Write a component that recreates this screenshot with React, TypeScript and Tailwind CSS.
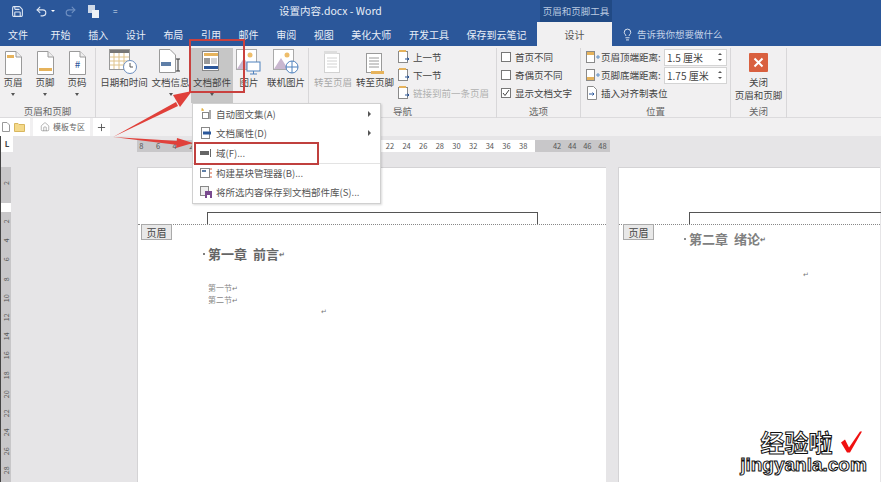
import { Home, Lightbulb, Plus, Redo2, Save, Undo2 } from "lucide-react";
import type { ReactNode } from "react";

const tabs = ["开始", "插入", "设计", "布局", "引用", "邮件", "审阅", "视图", "美化大师", "开发工具", "保存到云笔记"];
const rulerLeft = [8, 6, 4, 2];
const rulerMid = [2, 4, 6, 8, 10, 12, 14, 16, 18, 20, 22, 24, 26, 28, 30, 32, 34, 36, 38];
const rulerRight = [42, 44, 46, 48];
const vRuler = [2, 4, 6, 8, 10, 12, 14, 16, 18, 20, 22, 24, 26, 28];

function Caret() {
  return <span className="mt-[4px] block h-0 w-0 border-x-[2.5px] border-t-[3px] border-x-transparent border-t-[#555]" />;
}

function PageIcon({ band, hash }: { band?: "top" | "bottom"; hash?: boolean }) {
  return (
    <svg width="20" height="24" viewBox="0 0 20 24">
      <path d="M2.5 .5H13L18.5 6V23.5H2.5Z" fill="#fff" stroke="#9a9a9a" />
      <path d="M13 .5V6H18.5" fill="#eee" stroke="#9a9a9a" />
      {band === "top" && <rect x="4" y="4" width="7" height="3" fill="#e6b35c" />}
      {band === "bottom" && <rect x="4" y="17" width="13" height="3" fill="#e6b35c" />}
      {hash && <text x="10.5" y="17" fontSize="10" textAnchor="middle" fill="#2b579a">#</text>}
    </svg>
  );
}

function CalendarIcon() {
  return (
    <svg width="30" height="26" viewBox="0 0 30 26">
      <rect x=".5" y=".5" width="20" height="20" fill="#fff" stroke="#999" />
      <rect x="1" y="1" width="19" height="3" fill="#777" />
      <path d="M1 8H20M1 12H20M1 16H20M5 4V20M10 4V20M15 4V20" stroke="#e0c48c" />
      <circle cx="21" cy="18" r="6.5" fill="#fff" stroke="#6c8ebf" />
      <path d="M21 14V18H24" fill="none" stroke="#555" />
    </svg>
  );
}

function DocInfoIcon() {
  return (
    <svg width="26" height="26" viewBox="0 0 26 26">
      <path d="M1.5 .5H12L17.5 6V23.5H1.5Z" fill="#fff" stroke="#999" />
      <rect x="3" y="13" width="10" height="4" fill="#5f7fa8" />
      <path d="M18 10H22M20 10V22M18 22H22" fill="none" stroke="#333" />
    </svg>
  );
}

function PartsIcon() {
  return (
    <svg width="20" height="24" viewBox="0 0 20 24">
      <rect x=".5" y=".5" width="16" height="19" fill="#fff" stroke="#888" />
      <rect x="2" y="2" width="14" height="3" fill="#e6b35c" />
      <rect x="2" y="7" width="6" height="6" fill="#999" />
      <path d="M9 8H15M9 10H15M9 12H15" stroke="#aaa" />
      <rect x="2" y="15" width="14" height="3" fill="#2b579a" />
    </svg>
  );
}

function PictureIcon({ online }: { online?: boolean }) {
  return (
    <svg width="26" height="26" viewBox="0 0 26 26">
      <rect x=".5" y=".5" width="20" height="20" fill="#fff" stroke="#aaa" />
      <circle cx="14" cy="6" r="2.5" fill="#eebd6a" />
      <path d="M1 20L8 9L15 20Z" fill="#c9b7cf" />
      {online ? (
        <g fill="#fff" stroke="#4f81bd">
          <circle cx="19" cy="18" r="6" />
          <path d="M13 18H25M19 12V24" />
        </g>
      ) : (
        <g fill="#fff" stroke="#4f81bd">
          <rect x="11" y="13" width="13" height="9" />
          <path d="M17.5 22V25M14 25H21" />
        </g>
      )}
    </svg>
  );
}

function GotoIcon({ dim, top }: { dim?: boolean; top?: boolean }) {
  const c = dim ? "#d2d2d2" : "#9a9a9a";
  return (
    <svg width="22" height="24" viewBox="0 0 22 24">
      <rect x="2.5" y="2.5" width="15" height="19" fill="#fff" stroke={c} />
      <path d="M5 7H15M5 10H15M5 13H15M5 16H15" stroke={c} />
      <rect x={top ? 2 : 7} y={top ? 0 : 20} width="13" height="3" fill={dim ? "#ddd" : "#e6b35c"} />
    </svg>
  );
}

function SmallNavIcon() {
  return (
    <svg width="12" height="14" viewBox="0 0 12 14">
      <rect x=".5" y="1.5" width="9" height="11" fill="#fff" stroke="#8a8a8a" />
      <rect x="1" y="0" width="7" height="2" fill="#e6b35c" />
      <path d="M7 9H11M9.5 7.5L11 9L9.5 10.5" fill="none" stroke="#2b579a" />
    </svg>
  );
}

function DistanceIcon({ top }: { top?: boolean }) {
  return (
    <svg width="15" height="13" viewBox="0 0 15 13">
      <rect x=".5" y=".5" width="8" height="11" fill="#fff" stroke="#8a8a8a" />
      <rect x="1" y={top ? 1 : 8} width="7" height="3" fill="#e6b35c" />
      <path d="M10 6H14M12 4V8" stroke="#5f8fc5" />
    </svg>
  );
}

function Group({ label, className, children }: { label: string; className: string; children: ReactNode }) {
  return (
    <div className={`flex h-[70px] shrink-0 flex-col border-r border-[#d8d7d9] ${className}`}>
      <div className="flex flex-1">{children}</div>
      <div className="h-[13px] text-center text-[9.5px] leading-[12px] text-[#666]">{label}</div>
    </div>
  );
}

function LargeButton({ icon, label, className, caret, dim, active }: { icon: ReactNode; label: string; className: string; caret?: boolean; dim?: boolean; active?: boolean }) {
  return (
    <div className={`flex flex-col items-center ${active ? "bg-[#c6c6c6]" : ""} ${className}`}>
      <div className="flex h-[27px] items-end justify-center">{icon}</div>
      <div className={`mt-[1px] whitespace-nowrap text-[9.5px] leading-[13px] ${dim ? "text-[#a8a8a8]" : "text-[#444]"}`}>{label}</div>
      {caret && <Caret />}
    </div>
  );
}

function SmallRow({ icon, label, dim }: { icon: ReactNode; label: string; dim?: boolean }) {
  return (
    <div className={`flex h-[18px] items-center gap-[3px] whitespace-nowrap text-[9.5px] ${dim ? "text-[#b0b0b0]" : "text-[#444]"}`}>
      {icon}
      <span>{label}</span>
    </div>
  );
}

function CheckRow({ label, checked }: { label: string; checked?: boolean }) {
  return (
    <div className="flex h-[18px] items-center gap-[4px] whitespace-nowrap text-[9.5px] text-[#444]">
      <span className="flex h-[10px] w-[10px] items-center justify-center border border-[#777] bg-white">
        {checked && (
          <svg width="8" height="8" viewBox="0 0 8 8">
            <path d="M1 4L3 6.5L7 1" fill="none" stroke="#444" />
          </svg>
        )}
      </span>
      <span>{label}</span>
    </div>
  );
}

function SpinRow({ top, label, value }: { top?: boolean; label: string; value: string }) {
  return (
    <div className="flex h-[18px] items-center whitespace-nowrap text-[9.5px] text-[#444]">
      <DistanceIcon top={top} />
      <span className="w-[63px]">{label}</span>
      <span className="flex h-[17px] w-[63px] items-center justify-between border border-[#d4d4d4] bg-white pl-[2px] pr-[4px] text-[10px]">
        {value}
        <span className="flex flex-col gap-[4px]">
          <span className="block h-0 w-0 border-x-2 border-b-2 border-x-transparent border-b-[#555]" />
          <span className="block h-0 w-0 border-x-2 border-t-2 border-x-transparent border-t-[#555]" />
        </span>
      </span>
    </div>
  );
}

function MenuItem({ icon, label, arrow, divider }: { icon: ReactNode; label: ReactNode; arrow?: boolean; divider?: boolean }) {
  return (
    <div className={`flex h-[19.5px] items-center pl-[3px] pr-[9px] text-[9.5px] text-[#555] ${divider ? "border-t border-[#e3e3e3]" : ""}`}>
      <span className="flex w-[20px] justify-center">{icon}</span>
      <span className="flex-1 whitespace-nowrap">{label}</span>
      {arrow && <span className="h-0 w-0 border-y-[3px] border-l-[3px] border-y-transparent border-l-[#555]" />}
    </div>
  );
}

function ReturnMark({ className }: { className?: string }) {
  return <span className={`text-[7px] leading-none text-[#777] ${className ?? ""}`}>↵</span>;
}

function PageHeader({ className }: { className: string }) {
  return (
    <div className="pt-[44px]">
      <div className={`h-[12px] border-x border-t border-[#555] ${className}`} />
      <div className="border-t border-dotted border-[#888]" />
    </div>
  );
}

function HeaderTag({ className }: { className: string }) {
  return (
    <div className={`absolute top-[56px] flex h-[16px] w-[31px] items-center justify-center border border-[#aaa] bg-[#e8e8e8] text-[10px] text-[#444] ${className}`}>
      页眉
    </div>
  );
}

export default function App() {
  return (
    <div className="relative h-[482px] w-[881px] overflow-hidden bg-[#e6e5e7] [font-family:'Noto_Sans_CJK_SC','Liberation_Sans',sans-serif]">
      {/* title bar */}
      <div className="flex h-[22px] items-center bg-[#2b579a] text-white">
        <div className="flex w-[279px] items-center pl-[11px] text-[#dfe7f3]">
          <Save className="h-[13px] w-[13px]" />
          <Undo2 className="ml-[11px] h-[13px] w-[13px]" />
          <span className="ml-[3px] h-0 w-0 border-x-2 border-t-2 border-x-transparent border-t-white" />
          <Redo2 className="ml-[9px] h-[13px] w-[13px] text-[#6f90c2]" />
          <svg className="ml-[10px]" width="13" height="15" viewBox="0 0 13 15">
            <rect x="1" y="1" width="7" height="8" fill="#cfd9e8" />
            <rect x="5" y="6" width="7" height="8" fill="#eef2f7" />
          </svg>
          <span className="ml-[13px] text-[8px]">=</span>
        </div>
        <div className="w-[261px] whitespace-nowrap text-[10.5px] text-[#e8eef7]">设置内容.docx - Word</div>
        <div className="flex h-full w-[72px] items-center justify-center whitespace-nowrap bg-[#214a85] text-[9.5px] text-[#b9c9e0]">页眉和页脚工具</div>
      </div>

      {/* tabs */}
      <div className="flex h-[24px] items-center bg-[#2b579a] text-[10px] text-[#e8eef7]">
        <div className="flex w-[537px] gap-[17.6px] pl-[8px]">
          <span>文件</span>
          {tabs.map((t, i) => (
            <span key={i} className={i === 0 ? "ml-[5px] whitespace-nowrap" : "whitespace-nowrap"}>{t}</span>
          ))}
        </div>
        <div className="flex h-full w-[75px] items-center justify-center bg-[#f1f0f1] text-[#555]">设计</div>
        <div className="flex items-center gap-[3px] pl-[9px] text-[9.5px] text-[#c3d2e8]">
          <Lightbulb className="h-[13px] w-[13px] text-white" strokeWidth={1.5} />
          告诉我你想要做什么
        </div>
      </div>

      {/* ribbon */}
      <div className="flex h-[72px] border-b border-[#dcdbdd] bg-[#f1f0f1] pt-[2px]">
        <Group label="页眉和页脚" className="w-[96px]">
          <LargeButton icon={<PageIcon band="top" />} label="页眉" caret className="w-[26px]" />
          <LargeButton icon={<PageIcon band="bottom" />} label="页脚" caret className="ml-[6px] w-[26px]" />
          <LargeButton icon={<PageIcon hash />} label="页码" caret className="ml-[6px] w-[26px]" />
        </Group>
        <Group label="插入" className="w-[213px]">
          <LargeButton icon={<CalendarIcon />} label="日期和时间" className="ml-[4px] w-[48px]" />
          <LargeButton icon={<DocInfoIcon />} label="文档信息" caret className="ml-[3px] w-[39px]" />
          <LargeButton icon={<PartsIcon />} label="文档部件" caret active className="ml-[1px] h-[55px] w-[42px]" />
          <LargeButton icon={<PictureIcon />} label="图片" className="ml-[3px] w-[26px]" />
          <LargeButton icon={<PictureIcon online />} label="联机图片" className="ml-[4px] w-[40px]" />
        </Group>
        <Group label="导航" className="w-[188px]">
          <LargeButton icon={<GotoIcon dim top />} label="转至页眉" dim className="ml-[4px] w-[40px]" />
          <LargeButton icon={<GotoIcon />} label="转至页脚" className="ml-[2px] w-[40px]" />
          <div className="ml-[3px]">
            <SmallRow icon={<SmallNavIcon />} label="上一节" />
            <SmallRow icon={<SmallNavIcon />} label="下一节" />
            <SmallRow icon={<SmallNavIcon />} label="链接到前一条页眉" dim />
          </div>
        </Group>
        <Group label="选项" className="w-[84px]">
          <div className="ml-[4px]">
            <CheckRow label="首页不同" />
            <CheckRow label="奇偶页不同" />
            <CheckRow label="显示文档文字" checked />
          </div>
        </Group>
        <Group label="位置" className="w-[150px]">
          <div className="ml-[5px]">
            <SpinRow top label="页眉顶端距离:" value="1.5 厘米" />
            <SpinRow label="页脚底端距离:" value="1.75 厘米" />
            <SmallRow
              icon={
                <svg width="12" height="14" viewBox="0 0 12 14">
                  <path d="M1.5 .5H7.5L10.5 3.5V13.5H1.5Z" fill="#fff" stroke="#8a8a8a" />
                  <path d="M3 8H8M6.5 6.5L8 8L6.5 9.5" fill="none" stroke="#2b579a" />
                </svg>
              }
              label="插入对齐制表位"
            />
          </div>
        </Group>
        <Group label="关闭" className="w-[56px]">
          <div className="flex w-full flex-col items-center">
            <div className="mt-[5px] flex h-[19px] w-[19px] items-center justify-center rounded-[1px] bg-[#d9603f]">
              <svg width="11" height="11" viewBox="0 0 11 11">
                <path d="M1.5 1.5L9.5 9.5M9.5 1.5L1.5 9.5" stroke="#fff" strokeWidth="2" />
              </svg>
            </div>
            <div className="mt-[4px] whitespace-nowrap text-center text-[9.5px] leading-[13px] text-[#444]">
              关闭
              <br />
              页眉和页脚
            </div>
          </div>
        </Group>
      </div>

      {/* document tab strip */}
      <div className="flex h-[18px] items-stretch gap-[3px] bg-[#f1f0f1]">
        <div className="flex w-[30px] items-center gap-[4px] bg-white pl-[2px]">
          <svg width="8" height="10" viewBox="0 0 8 10">
            <path d="M.5.5H5L7.5 3V9.5H.5Z" fill="#fff" stroke="#999" />
          </svg>
          <svg width="11" height="10" viewBox="0 0 11 10">
            <path d="M.5 1.5H4L5 2.5H10.5V9.5H.5Z" fill="#f4d98a" stroke="#d8b75f" />
          </svg>
        </div>
        <div className="flex w-[57px] items-center gap-[3px] bg-white pl-[7px] text-[8px] text-[#666]">
          <Home className="h-[10px] w-[10px] text-[#888]" strokeWidth={1.5} />
          模板专区
        </div>
        <div className="flex w-[17px] items-center justify-center bg-white text-[#555]">
          <Plus className="h-[11px] w-[11px]" />
        </div>
      </div>

      {/* ruler */}
      <div className="flex h-[31px] border-l border-[#444] pt-[4px]">
        <div className="-mt-[4px] flex h-[16px] w-[12px] items-center justify-center bg-white text-[8px] font-bold leading-none text-[#444]">L</div>
        <div className="ml-[124px] flex h-[12px] w-[473px] text-[7.5px] leading-[12px] text-[#555]">
          <div className="flex w-[70px] bg-[#c8c7c9]">
            {rulerLeft.map((n, i) => (
              <span key={n} className={i === 0 ? "-ml-[4px] w-[16.67px] text-center" : "w-[16.67px] text-center"}>{n}</span>
            ))}
          </div>
          <div className="flex w-[328px] bg-white pl-[8px]">
            {rulerMid.map((n) => (
              <span key={n} className="w-[16.67px] shrink-0 text-center">{n}</span>
            ))}
          </div>
          <div className="flex w-[75px] bg-[#c8c7c9] pl-[14.5px]">
            {rulerRight.map((n) => (
              <span key={n} className="w-[16.67px] text-center">{n}</span>
            ))}
          </div>
        </div>
      </div>

      {/* workspace */}
      <div className="flex h-[315px] border-l border-[#444]">
        <div className="flex w-[10px] flex-col items-center bg-[#c8c7c9] text-[7px] leading-none text-[#555]">
          <span className="flex h-[32px] shrink-0 items-center justify-center [writing-mode:vertical-rl] rotate-180">2</span>
          <span className="mt-[4px] h-[9px] w-full shrink-0 bg-white" />
          {vRuler.map((n) => (
            <span key={n} className="flex h-[19.2px] shrink-0 items-center justify-center [writing-mode:vertical-rl] rotate-180">{n}</span>
          ))}
        </div>
        <div className="ml-[126px] flex">
          <div className="relative h-full w-[469px] shrink-0 border-l border-t border-[#d4d3d5] bg-white">
            <PageHeader className="ml-[69px] w-[331px]" />
            <HeaderTag className="left-[3px]" />
            <div className="ml-[65px] mt-[20px] flex items-center text-[13px] font-bold leading-[18px] text-[#666]">
              <span className="mr-[3px] h-[2px] w-[2px] rounded-full bg-[#555]" />第一章&nbsp;&nbsp;前言
              <ReturnMark />
            </div>
            <div className="ml-[70px] mt-[19px] text-[8px] leading-[12px] text-[#888]">
              <div>第一节<ReturnMark /></div>
              <div>第二节<ReturnMark /></div>
            </div>
            <div className="-mt-[7px] ml-[183px] leading-none"><ReturnMark /></div>
          </div>
          <div className="relative ml-[12px] h-full w-[262px] shrink-0 border-l border-t border-[#d4d3d5] bg-white">
            <PageHeader className="ml-[70px] w-[200px]" />
            <HeaderTag className="left-[4px]" />
            <div className="ml-[65px] mt-[5px] flex items-center text-[13px] font-bold leading-[18px] text-[#808080]">
              <span className="mr-[3px] h-[2px] w-[2px] rounded-full bg-[#666]" />第二章&nbsp;&nbsp;绪论
              <ReturnMark />
            </div>
            <div className="ml-[184px] mt-[14px] leading-none"><ReturnMark /></div>
          </div>
        </div>
      </div>

      {/* dropdown menu */}
      <div className="absolute left-[192px] top-[103px] h-[101px] w-[189px] border border-[#d0d0d0] bg-white shadow-[1px_1px_2px_rgba(0,0,0,0.15)]">
        <MenuItem
          arrow
          label="自动图文集(A)"
          icon={
            <svg width="12" height="13" viewBox="0 0 12 13">
              <path d="M2 1L3 4M1 3H4" stroke="#e0b040" />
              <rect x="2.5" y="5.5" width="6" height="6" fill="#fff" stroke="#888" />
              <path d="M10 3V12" stroke="#555" />
            </svg>
          }
        />
        <MenuItem
          arrow
          label="文档属性(D)"
          icon={
            <svg width="12" height="13" viewBox="0 0 12 13">
              <rect x="1.5" y=".5" width="8" height="11" fill="#fff" stroke="#888" />
              <rect x="3" y="4.5" width="8" height="3" fill="#2b579a" />
            </svg>
          }
        />
        <MenuItem
          label="域(F)..."
          icon={
            <svg width="12" height="8" viewBox="0 0 12 8">
              <rect x="0" y="2" width="9" height="4" fill="#666" />
              <path d="M10.5 0V8" stroke="#666" />
            </svg>
          }
        />
        <MenuItem
          divider
          label="构建基块管理器(B)..."
          icon={
            <svg width="12" height="12" viewBox="0 0 12 12">
              <rect x=".5" y="1.5" width="9" height="9" fill="#fff" stroke="#888" />
              <rect x="2" y="3" width="4" height="2" fill="#5f7fa8" />
              <path d="M11 1V11" stroke="#d9603f" strokeDasharray="2 2" />
            </svg>
          }
        />
        <MenuItem
          label="将所选内容保存到文档部件库(S)..."
          icon={
            <svg width="12" height="12" viewBox="0 0 12 12">
              <rect x=".5" y=".5" width="8" height="9" fill="#eee" stroke="#888" />
              <rect x="5" y="5" width="7" height="7" fill="#7a4a8f" />
              <rect x="7" y="9" width="3" height="3" fill="#fff" />
            </svg>
          }
        />
      </div>

      {/* annotation boxes and arrows */}
      <div className="absolute left-[189px] top-[39px] h-[54px] w-[56px] border-2 border-[#c9413f]" />
      <div className="absolute left-[194px] top-[142px] h-[23px] w-[125px] border-2 border-[#c0403e]" />
      <svg className="absolute left-0 top-0" width="881" height="482" viewBox="0 0 881 482">
        <path d="M113 137L176 102L178 106Z" fill="#e0403a" />
        <path d="M192 91L173 95L180 107Z" fill="#e0403a" />
        <path d="M113 137L178 141V145Z" fill="#e0403a" />
        <path d="M193 143L177 138L176 148Z" fill="#e0403a" />
      </svg>

      {/* watermark */}
      <div className="absolute left-[741px] top-[429px] flex w-[125px] flex-col items-center font-bold leading-none">
        <div className="ml-[16px] flex items-center gap-[6px]">
          <span className="text-[24px] text-white [-webkit-text-stroke:1px_#111]">经验啦</span>
          <svg width="24" height="25" viewBox="0 0 24 24">
            <path d="M2 13L6 10L10 18L21 2L23 2L11 23H8Z" fill="#f01010" />
          </svg>
        </div>
        <span className="mt-[1px] whitespace-nowrap text-[19px] text-white [-webkit-text-stroke:1px_#111] [font-family:'Liberation_Sans',sans-serif]">jingyanla.com</span>
      </div>
    </div>
  );
}
